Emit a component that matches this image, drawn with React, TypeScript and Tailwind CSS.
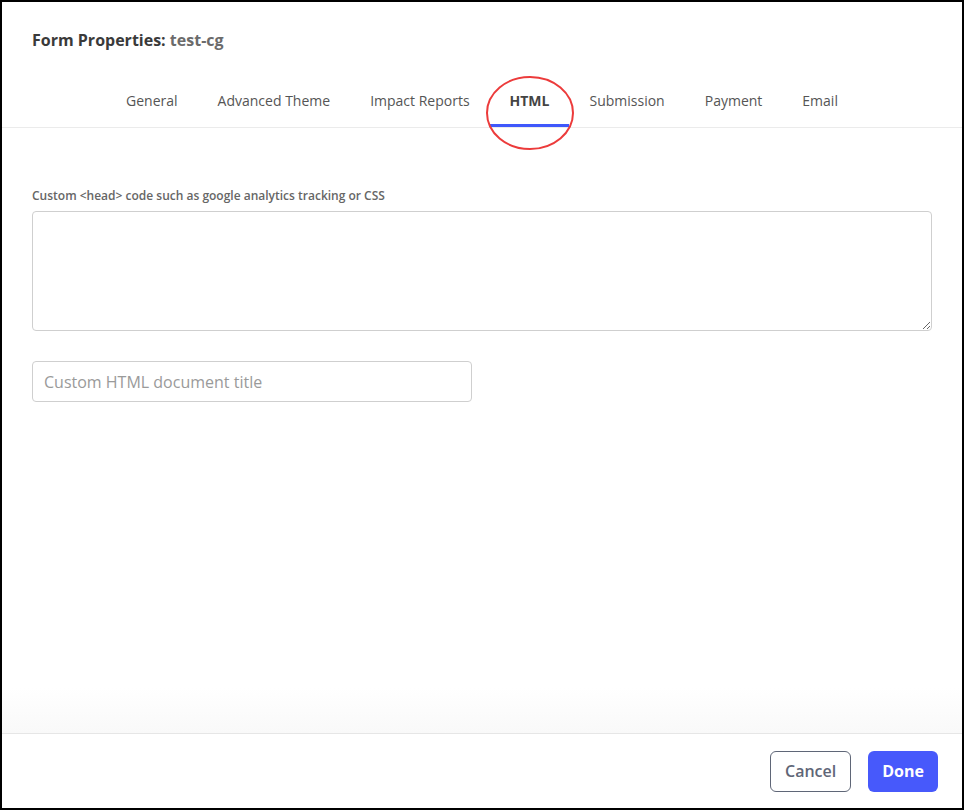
import React from "react";

const tabs = ["General", "Advanced Theme", "Impact Reports", "HTML", "Submission", "Payment", "Email"];

export default function App() {
  return (
    <div
      className="w-[964px] h-[810px] border-2 border-black bg-white flex flex-col text-[#333]"
      style={{ fontFamily: '"Open Sans", "Liberation Sans", sans-serif' }}
    >
      <div className="px-[30px] pt-[26px]">
        <h1 className="text-[16px] leading-[24px] font-bold text-[#3a3a3a]">
          Form Properties: <span className="text-[#6b6b6b]">test-cg</span>
        </h1>
      </div>
      <div className="mt-[28px] border-b border-[#ebebeb] flex justify-center">
        {tabs.map((t) => {
          const active = t === "HTML";
          return (
            <div
              key={t}
              className={
                active
                  ? "relative px-5 pt-[11px] pb-[13px] text-[14px] leading-[20px] font-bold text-[#444] border-b-[3px] border-[#3f58fb]"
                  : "relative px-5 pt-[11px] pb-[13px] text-[14px] leading-[20px] text-[#555] border-b-[3px] border-transparent"
              }
            >
              {t}
              {active && (
                <svg
                  className="absolute left-[-5px] top-[-5px] pointer-events-none"
                  width="90"
                  height="76"
                  viewBox="0 0 90 76"
                >
                  <ellipse cx="45" cy="38" rx="43" ry="36" fill="none" stroke="#ec3b3b" strokeWidth="2" />
                </svg>
              )}
            </div>
          );
        })}
      </div>
      <div className="flex-1 flex flex-col px-[30px] pt-[60px]">
        <label className="block text-[12px] leading-[16px] text-[#666] font-semibold mb-[7px]">
          Custom &lt;head&gt; code such as google analytics tracking or CSS
        </label>
        <textarea className="w-full h-[120px] border border-[#cfcfcf] rounded-[4px] resize-y outline-none p-2 text-[14px]" />
        <input
          className="mt-[30px] w-[440px] h-[41px] border border-[#cfcfcf] rounded-[4px] px-[11px] text-[16px] outline-none placeholder:text-[#9a9a9a]"
          placeholder="Custom HTML document title"
        />
      </div>
      <div className="h-[45px] bg-gradient-to-b from-white to-[#f9f9f9]" />
      <div className="border-t border-[#e6e6e6] h-[75px] flex items-center justify-end gap-[17px] pr-[24px]">
        <button className="h-[41px] px-[14px] w-[81px] border border-[#5f6677] rounded-[6px] text-[16px] font-semibold text-[#5f6677] bg-white">
          Cancel
        </button>
        <button className="h-[41px] w-[70px] rounded-[6px] text-[16px] font-bold text-white bg-[#4759fb]">
          Done
        </button>
      </div>
    </div>
  );
}
